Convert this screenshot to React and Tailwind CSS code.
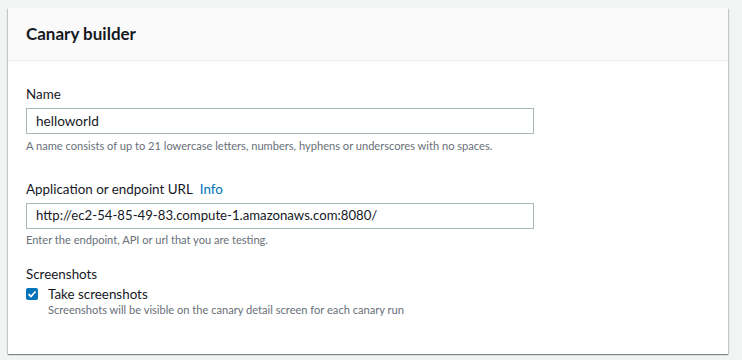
export default function App() {
  return (
    <div className="min-h-[360px] bg-[#f2f3f3] pt-2 pl-2 pr-[14px] font-['Lato',Arial,sans-serif]">
      <div className="bg-white shadow-[0_1px_1px_0_rgba(0,28,36,0.3),1px_1px_1px_0_rgba(0,28,36,0.15),-1px_1px_1px_0_rgba(0,28,36,0.15)]">
        <div className="h-[53px] flex items-center px-[18px] bg-[#fafafa] border-b border-[#eaeded]">
          <h2 className="text-[17px] font-bold text-[#16191f]">Canary builder</h2>
        </div>
        <div className="px-[18px] pt-[22px] pb-[37px] text-[#16191f]">
          <div className="text-[13.4px] leading-[22px]">Name</div>
          <div className="mt-[3px] w-[508px] h-[26px] border border-[#aab7b8] flex items-center px-[9px] text-[13.6px]">
            helloworld
          </div>
          <div className="mt-[4px] text-[11.1px] leading-[16px] text-[#687078]">
            A name consists of up to 21 lowercase letters, numbers, hyphens or underscores with no spaces.
          </div>

          <div className="mt-[24px] text-[13.4px] leading-[22px]">
            Application or endpoint URL <span className="ml-[4px] text-[#0073bb]">Info</span>
          </div>
          <div className="mt-[3px] w-[508px] h-[26px] border border-[#aab7b8] flex items-center px-[9px] text-[13.2px]">
            http://ec2-54-85-49-83.compute-1.amazonaws.com:8080/
          </div>
          <div className="mt-[3px] text-[11.1px] leading-[16px] text-[#687078]">
            Enter the endpoint, API or url that you are testing.
          </div>

          <div className="mt-[15px] text-[13.4px] leading-[22px]">Screenshots</div>
          <div className="flex gap-[10px]">
            <div className="mt-[3px] w-[12px] h-[12px] rounded-[2px] bg-[#0073bb] flex items-center justify-center shrink-0">
              <svg width="10" height="10" viewBox="0 0 10 10">
                <path d="M1.5 5.2 L4 7.5 L8.5 2.5" fill="none" stroke="white" strokeWidth="1.8" />
              </svg>
            </div>
            <div>
              <div className="text-[13.4px] leading-[18px]">Take screenshots</div>
              <div className="text-[11.1px] leading-[14px] text-[#687078]">
                Screenshots will be visible on the canary detail screen for each canary run
              </div>
            </div>
          </div>
        </div>
      </div>
    </div>
  );
}
